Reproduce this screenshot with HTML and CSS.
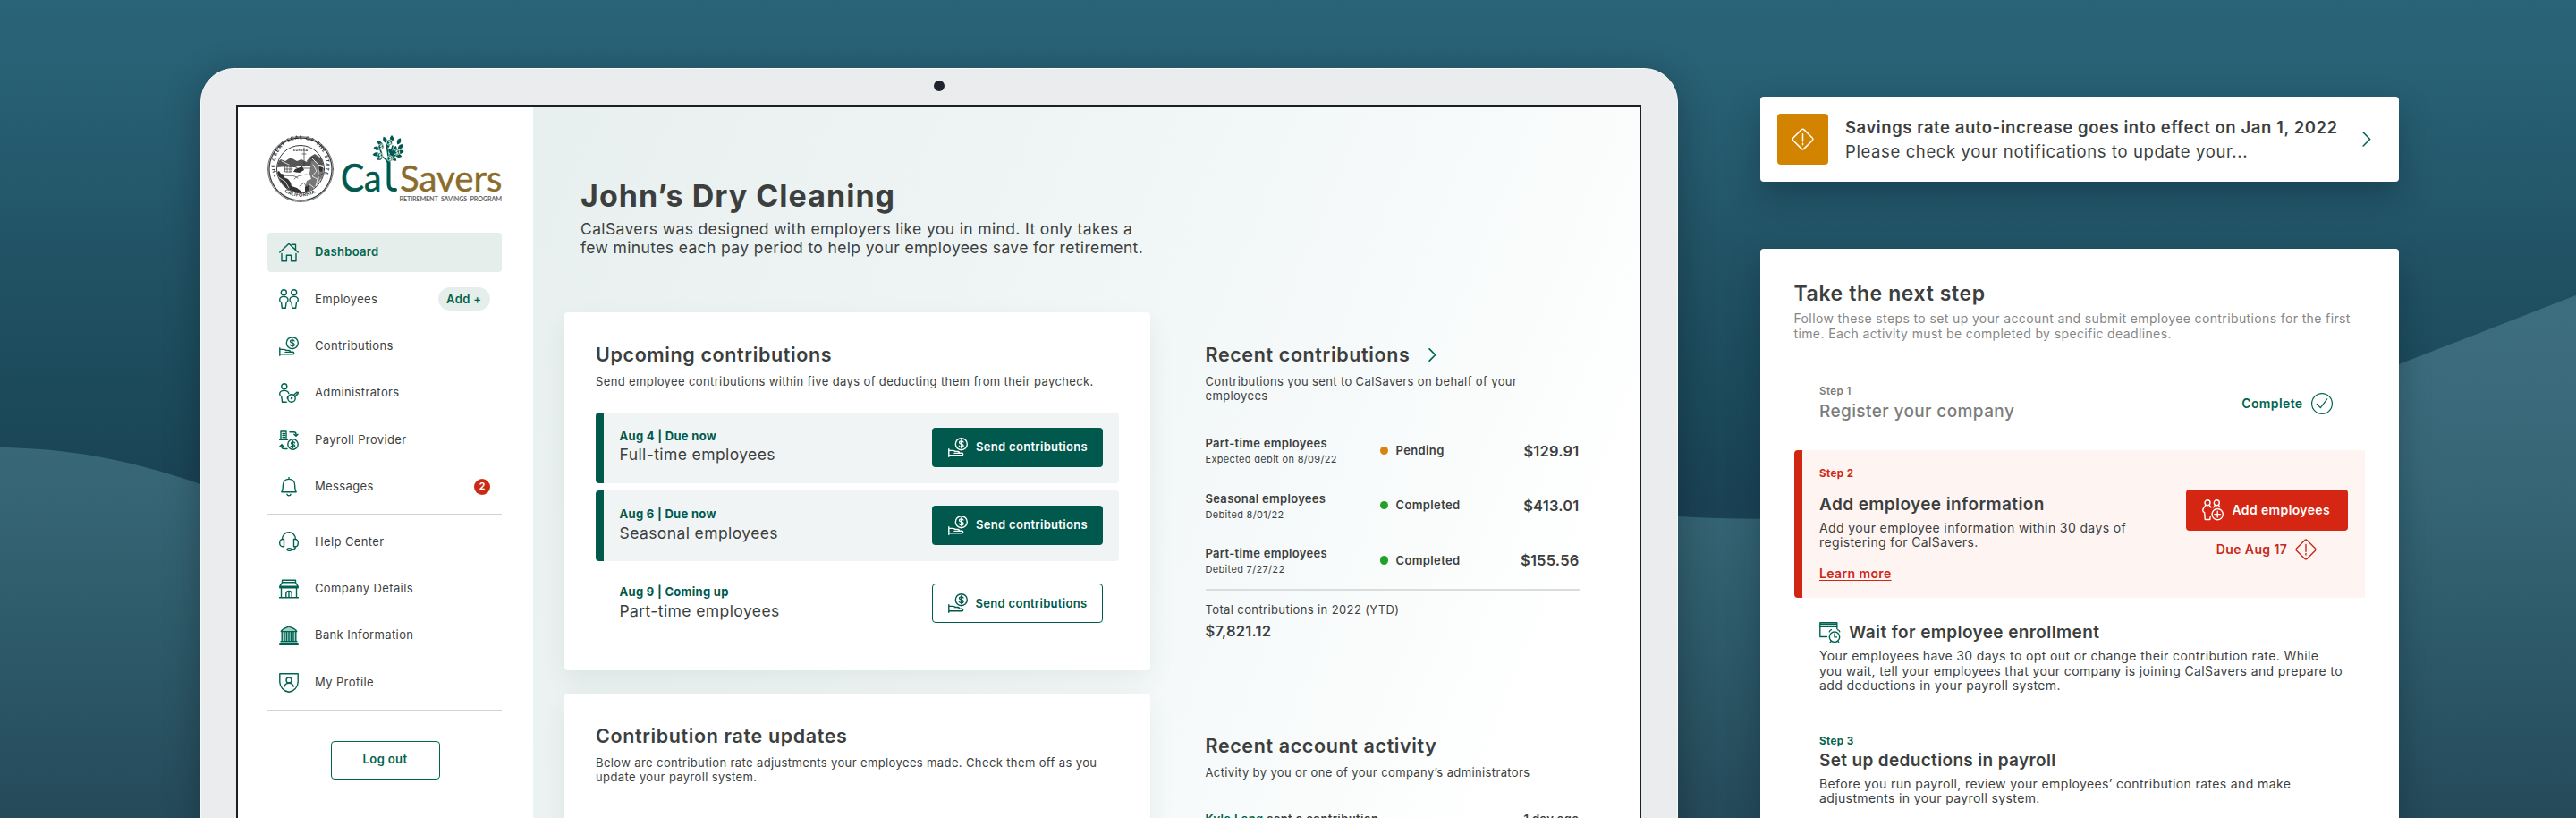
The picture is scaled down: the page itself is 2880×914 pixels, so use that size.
FILE: index.html
```html
<!DOCTYPE html>
<html lang="en">
<head>
<meta charset="utf-8">
<title>CalSavers Dashboard</title>
<link rel="stylesheet" href="styles.css">
</head>
<body>
<svg class="defs" width="0" height="0" aria-hidden="true">
  <symbol id="i-home" viewBox="0 0 22 22"><path d="M.8 11 11 1.2 21.2 11M14.3 4.3V2.2h4.2v6.1M3 12.5v8.3h5.4v-6.6h5.2v6.6H19v-8.3"/></symbol>
  <symbol id="i-people" viewBox="0 0 22 22"><circle cx="5.3" cy="3.7" r="3"/><circle cx="16.7" cy="3.7" r="3"/><path d="M5.3 8.4C2.4 8.4.7 9.9.7 12.2c0 1.300.5 2.300 1.800 2.700l.9 6.400h3.800l.9-6.400c1.200-.4 1.900-1.400 1.900-2.700 0-2.300-1.800-3.800-4.700-3.800zM16.700 8.400c-2.900 0-4.700 1.500-4.700 3.800 0 1.300.7 2.300 1.900 2.700l.9 6.400h3.800l.9-6.400c1.300-.4 1.800-1.400 1.800-2.700 0-2.300-1.700-3.800-4.600-3.800z"/></symbol>
  <symbol id="i-hand" viewBox="0 0 22 22"><circle cx="14.800" cy="7.200" r="6.500"/><path d="M17 5c-.5-.8-1.200-1.100-2.200-1.100-1.200 0-2.200.6-2.200 1.600 0 2.300 4.500 1 4.500 3.400 0 1-1 1.700-2.300 1.700-1.100 0-2-.4-2.400-1.300M14.800 2.700v9M.8 12.800v8.500M.8 14.400h4.800c1 0 1.800 1 2.800 1h2.800c1.500 0 1.500 2 0 2H7M10.800 17.300h4.600c1.700 0 1.700 2.500 0 2.500H.8"/></symbol>
  <symbol id="i-admin" viewBox="0 0 22 22"><circle cx="5.800" cy="3.700" r="3"/><path d="M10.800 11.500c-.5-2-2.300-3.100-5-3.100C2.600 8.400.7 10 .7 12.300c0 1.300.6 2.200 2 2.600l.9 6.400h4.600M9.600 15.500l-.4 1.500"/><circle cx="14" cy="17" r="4.200"/><circle cx="14" cy="17" r=".6"/><path d="M16.200 13.500l3.700-3.300 1.400.3-.2 1.500-1.100.4-.2 1.300-1.300.3-.8 1.200"/></symbol>
  <symbol id="i-payroll" viewBox="0 0 22 22"><path d="M.5 10.300h9M2 10V1h6v9M4 3.500h2.500M4 5.500h2.500M4 7.700h2.500M12 1.800h4.500c1.700 0 2.500.8 2.500 2.500v1.500M16.800 4.200 19 6.300l2-2.100M9 20.500H5.500C3.800 20.500 3 19.700 3 18v-1.800M.8 18 3 15.800 5 18"/><circle cx="15.500" cy="15.500" r="5.700"/><path d="M17.600 13.800c-.5-.7-1.200-.9-2.100-.9-1.200 0-2 .5-2 1.300 0 2 4.100.8 4.100 2.800 0 .8-.9 1.400-2.100 1.400-1 0-1.800-.4-2.200-1M15.500 11.800v7.600"/></symbol>
  <symbol id="i-bell" viewBox="0 0 22 22"><path d="M11 .5v1.800M2.800 16.800c1.500-1.800 1.500-3.500 1.500-7C4.300 5 7 2.400 11 2.400S17.700 5 17.700 9.800c0 3.500 0 5.200 1.500 7zM9 19.300c.3 1.900 3.700 1.900 4 0"/></symbol>
  <symbol id="i-headset" viewBox="0 0 22 22"><path d="M3.500 8.500C3.500 3.800 6.800.8 11 .8s7.500 3 7.500 7.700M5.500 8.500v8.300H4c-2 0-3.300-1.700-3.300-4.100S2 8.500 4 8.500zM16.500 8.500v8.300H18c2 0 3.300-1.700 3.300-4.100S20 8.500 18 8.500zM18.500 16.800c0 2.200-1.700 3.200-4.500 3.200"/><ellipse cx="11.500" cy="20" rx="2.500" ry="1.400"/></symbol>
  <symbol id="i-store" viewBox="0 0 22 22"><path d="M3.500 1.200h15v2.600h-15zM3.500 3.800.8 8.200h20.400l-2.700-4.400M.8 8.200v1.500h20.400V8.200M2.500 9.700v11M19.500 9.700v11M.3 20.800h21.400M7.800 20.800v-4c0-4.500 6.400-4.500 6.400 0v4M11 14v6.500"/></symbol>
  <symbol id="i-bank" viewBox="0 0 22 22"><path class="tint" d="M2 6.500C3.500 3 8 2.600 11 .8c3 1.800 7.500 2.200 9 5.700zM3 7h16v10H3z"/><path d="M2.300 6.600C3.500 3.300 8 2.800 11 .9c3 1.900 7.500 2.400 8.700 5.700zM3.200 7v10.500M6 7v10.500M8.500 7v10.500M11 7v10.500M13.500 7v10.500M16 7v10.500M18.800 7v10.500M2 17.700h18M.8 20h20.400M.8 21.500h20.400"/></symbol>
  <symbol id="i-profile" viewBox="0 0 22 22"><path d="M.8.800h20.400v9c0 6-4.500 10.500-10.200 11.500C5.300 20.300.8 15.800.8 9.800z"/><circle cx="11" cy="8" r="3"/><path d="M5.800 15.200c.8-2.800 2.600-4 5.200-4s4.400 1.200 5.200 4"/></symbol>
  <symbol id="i-warn" viewBox="0 0 24 24"><path d="M10.600 1.800a2 2 0 0 1 2.800 0l8.800 8.800a2 2 0 0 1 0 2.800l-8.800 8.800a2 2 0 0 1-2.800 0l-8.800-8.800a2 2 0 0 1 0-2.800zM12 6.500v7.800M12 16.500v1.600"/></symbol>
  <symbol id="i-check" viewBox="0 0 24 24"><circle cx="12" cy="12" r="11.400"/><path d="m6.300 12.500 4 4.200 7.400-9.900"/></symbol>
  <symbol id="i-addpeople" viewBox="0 0 24 24"><circle cx="6" cy="3.800" r="3"/><circle cx="16.300" cy="3.800" r="3"/><path d="M3.900 6.300 2.200 9C1.200 10 .8 11 .8 12.300c0 1.200.7 2 1.900 2.400l.6 7.800h5.500M8 6.300l2 2.700M14.400 6.300 12.800 9M18.300 6.300l1.600 2.400M8.800 22.500l.4-3"/><circle cx="17.200" cy="16.600" r="6.100"/><path d="M17.200 13.300v6.600M13.900 16.600h6.600"/></symbol>
  <symbol id="i-calendar" viewBox="0 0 24 24"><path d="M8.500 16.500H.8V.8h19v6.700M.8 5.300h19M.8 2.500h19"/><circle cx="17" cy="16.700" r="5.700"/><path d="M17 13.300v3.600h2.500M11.300 10.800c.3-1.200 1-1.900 2.200-2.200M20.500 8.600c1.200.3 2 1 2.300 2.200M13.300 21.300l-1 1.300M20.700 21.300l1 1.300"/></symbol>
  <symbol id="i-chevron" viewBox="0 0 10 17"><path d="m1.200 1 7.400 7.500L1.200 16"/></symbol>
  <symbol id="leaf" viewBox="-3 -8 6 8" overflow="visible"><path d="M0 0C-3-3-2.600-5.500 0-8c2.600 2.500 3 5 0 8z"/></symbol>
</svg>

<div class="stage">
  <svg class="hills" viewBox="0 0 2880 914" preserveAspectRatio="none" aria-hidden="true">
    <defs><linearGradient id="hill" gradientUnits="userSpaceOnUse" x1="0" y1="330" x2="0" y2="914">
      <stop offset="0" stop-color="#3d6e80"/><stop offset=".3" stop-color="#386878"/><stop offset=".63" stop-color="#2e5b6a"/><stop offset="1" stop-color="#254a5a"/>
    </linearGradient></defs>
    <path fill="url(#hill)" d="M0 500C80 501 150 515 224 541 700 700 1300 540 1876 577 C2180 596 2400 515 2682 407L2880 330V914H0z"/>
  </svg>

  <section class="laptop">
    <span class="camera"></span>
    <div class="screen">
      <aside class="sidebar">
        <svg class="logo" viewBox="0 0 262 77" role="img" aria-label="CalSavers">
          <defs>
            <path id="ring" d="M11.500 46.500A28.500 28.500 0 1 1 62.500 46.500"/>
            <path id="ringlow" d="M16 62A32.500 32.500 0 0 0 58 62"/>
            <clipPath id="disc"><circle cx="37" cy="39" r="26"/></clipPath>
          </defs>
          <g fill="none" stroke="#3a3a3a"><circle cx="37" cy="39" r="36.500" stroke-width=".7"/><circle cx="37" cy="39" r="35" stroke-width="1.300" stroke-dasharray="1 .5"/><circle cx="37" cy="39" r="26.500" stroke-width="1"/></g>
          <g class="seal-text"><text><textPath href="#ring" textLength="126">THE GREAT SEAL OF THE STATE OF</textPath></text><text><textPath href="#ringlow" startOffset="4" textLength="36">CALIFORNIA</textPath></text><text class="eureka" x="29" y="18.500" textLength="16">EUREKA</text></g>
          <g clip-path="url(#disc)">
            <path fill="#555" d="M10 32l5-4 5 2 6-4 7 4 5-2 6 3 4-6 5-3 6 4 4 4v5l-10-2-5 3-10-1-8 2-9-1-11 1z"/>
            <path fill="#333" d="M9 43l4-2 2 3 4 1-1 3 5 2 3 4 1 4 6 2 4 3 2 4H22L9 53z"/>
            <path fill="#777" d="M49 30l6 0 3 6 5 2v14l-6 12-9 3-6-7 2-8 5-2-2-6z"/>
            <path stroke="#fff" stroke-width=".8" fill="none" d="M51 34l4 7-5 6 6 3-2 8 6-8M11 47l9 6 4 7M16 30l8 4M50 27l7 7M57 40v10M46 55l9 7"/>
            <path stroke="#333" stroke-width=".7" fill="none" d="M41 15v21M39 22h4M38 38h10M28 35l9 5-4 2M20 36h7v6h-7zM22 36v6M25 36v6M19 39h9M44 30c4-6 10-6 11-1M30 50c5-5 9-4 14-5M36 58l5-4 3 6M57 47l6-4M18 46c6 1 12-1 16 3"/>
            <path fill="#333" d="M31 39l8-3 2 4-5 3-7-1zM42 59l4-2 1 6-5 2zM58 36l4 1-1 5-3-1z"/>
          </g>
          <g class="wordmark">
            <text x="82" y="64" class="cal" textLength="45.500" lengthAdjust="spacingAndGlyphs">Ca</text>
            <text x="148" y="64" class="savers" textLength="114.500" lengthAdjust="spacingAndGlyphs">Savers</text>
            <text x="147.500" y="74.500" class="tagline" textLength="114.500">RETIREMENT SAVINGS PROGRAM</text>
          </g>
          <path fill="none" stroke="#00594c" stroke-width="4" d="M135.500 28v27c0 5.500 2.500 7.300 7.500 7"/>
          <g fill="none" stroke="#00594c" stroke-width="1.700"><path d="M135.500 35c0-6-5-9-10-11M135.500 33c1-6 5-9 11-11M135.500 28l-2-15M136 27l4-14M129 26l-3-9M142 24l4-7"/></g>
          <g class="leaves">
            <use href="#leaf" width="6" height="8" transform="translate(136 1)"/>
            <use href="#leaf" width="6" height="8" transform="translate(127 4) rotate(-25)"/>
            <use href="#leaf" width="6" height="8" transform="translate(146 3) rotate(25)"/>
            <use href="#leaf" width="6" height="8" transform="translate(121 10) rotate(-50)"/>
            <use href="#leaf" width="6" height="8" transform="translate(150 9) rotate(50)"/>
            <use href="#leaf" width="6" height="8" transform="translate(118 18) rotate(-80)"/>
            <use href="#leaf" width="6" height="8" transform="translate(152 16) rotate(80)"/>
            <use href="#leaf" width="6" height="8" transform="translate(118 26) rotate(-100)"/>
            <use href="#leaf" width="6" height="8" transform="translate(151 22) rotate(105)"/>
            <use href="#leaf" width="6" height="8" transform="translate(124 31) rotate(-120)"/>
            <use href="#leaf" width="6" height="8" transform="translate(146 27) rotate(125)"/>
            <use href="#leaf" width="6" height="8" transform="translate(131 8) rotate(-10)"/>
            <use href="#leaf" width="6" height="8" transform="translate(141 12) rotate(20)"/>
            <use href="#leaf" width="6" height="8" transform="translate(133 17) rotate(-30)"/>
            <use href="#leaf" width="6" height="8" transform="translate(138 17) rotate(15)"/>
          </g>
          <g class="coins"><circle cx="136.500" cy="9" r="3.200"/><circle cx="127" cy="14" r="3.200"/><circle cx="126" cy="24" r="3.200"/><circle cx="144.500" cy="20" r="3.200"/><circle cx="137" cy="27" r="3.200"/></g>
          <g class="coin-text"><text x="136.500" y="11">$</text><text x="127" y="16">$</text><text x="126" y="26">$</text><text x="144.500" y="22">$</text><text x="137" y="29">$</text></g>
        </svg>

        <nav class="nav">
          <a class="nav-item active"><svg class="ico"><use href="#i-home"/></svg>Dashboard</a>
          <a class="nav-item"><svg class="ico"><use href="#i-people"/></svg>Employees<span class="pill">Add +</span></a>
          <a class="nav-item"><svg class="ico"><use href="#i-hand"/></svg>Contributions</a>
          <a class="nav-item"><svg class="ico"><use href="#i-admin"/></svg>Administrators</a>
          <a class="nav-item"><svg class="ico"><use href="#i-payroll"/></svg>Payroll Provider</a>
          <a class="nav-item"><svg class="ico"><use href="#i-bell"/></svg>Messages<span class="badge">2</span></a>
        </nav>
        <nav class="nav ruled">
          <a class="nav-item"><svg class="ico"><use href="#i-headset"/></svg>Help Center</a>
          <a class="nav-item"><svg class="ico"><use href="#i-store"/></svg>Company Details</a>
          <a class="nav-item"><svg class="ico"><use href="#i-bank"/></svg>Bank Information</a>
          <a class="nav-item"><svg class="ico"><use href="#i-profile"/></svg>My Profile</a>
        </nav>
        <div class="logout-area"><button class="logout">Log out</button></div>
      </aside>

      <main class="main">
        <header class="intro">
          <h1>John’s Dry Cleaning</h1>
          <p>CalSavers was designed with employers like you in mind. It only takes a<br>few minutes each pay period to help your employees save for retirement.</p>
        </header>
        <div class="columns">
          <div class="col-left">
            <section class="card upcoming">
              <h2>Upcoming contributions</h2>
              <p class="lead">Send employee contributions within five days of deducting them from their paycheck.</p>
              <div class="due-list">
                <div class="due now"><div><div class="date">Aug 4 | Due now</div><div class="who">Full-time employees</div></div><button class="send"><svg class="ico"><use href="#i-hand"/></svg>Send contributions</button></div>
                <div class="due now"><div><div class="date">Aug 6 | Due now</div><div class="who">Seasonal employees</div></div><button class="send"><svg class="ico"><use href="#i-hand"/></svg>Send contributions</button></div>
                <div class="due"><div><div class="date">Aug 9 | Coming up</div><div class="who">Part-time employees</div></div><button class="send outline"><svg class="ico"><use href="#i-hand"/></svg>Send contributions</button></div>
              </div>
            </section>
            <section class="card updates">
              <h2>Contribution rate updates</h2>
              <p class="lead">Below are contribution rate adjustments your employees made. Check them off as you<br>update your payroll system.</p>
            </section>
          </div>
          <div class="col-right">
            <h2>Recent contributions<svg class="chev small"><use href="#i-chevron"/></svg></h2>
            <p class="lead">Contributions you sent to CalSavers on behalf of your<br>employees</p>
            <div class="history">
              <div class="entry"><div><div class="name">Part-time employees</div><div class="note">Expected debit on 8/09/22</div></div><div class="status pending">Pending</div><div class="amount">$129.91</div></div>
              <div class="entry"><div><div class="name">Seasonal employees</div><div class="note">Debited 8/01/22</div></div><div class="status">Completed</div><div class="amount">$413.01</div></div>
              <div class="entry"><div><div class="name">Part-time employees</div><div class="note">Debited 7/27/22</div></div><div class="status">Completed</div><div class="amount">$155.56</div></div>
            </div>
            <div class="total"><div class="total-label">Total contributions in 2022 (YTD)</div><div class="total-sum">$7,821.12</div></div>
            <h2>Recent account activity</h2>
            <p class="lead">Activity by you or one of your company’s administrators</p>
            <div class="activity"><span><b>Kyle Lang</b> sent a contribution</span><span>1 day ago</span></div>
          </div>
        </div>
      </main>
    </div>
  </section>

  <div class="side">
    <section class="notice">
      <div class="notice-icon"><svg><use href="#i-warn"/></svg></div>
      <div class="notice-text"><strong>Savings rate auto-increase goes into effect on Jan 1, 2022</strong><span>Please check your notifications to update your...</span></div>
      <svg class="chev"><use href="#i-chevron"/></svg>
    </section>
    <section class="steps">
      <h2>Take the next step</h2>
      <p class="hint">Follow these steps to set up your account and submit employee contributions for the first<br>time. Each activity must be completed by specific deadlines.</p>
      <div class="step done">
        <div><div class="step-no">Step 1</div><h3>Register your company</h3></div>
        <div class="complete">Complete<svg><use href="#i-check"/></svg></div>
      </div>
      <div class="step urgent">
        <div><div class="step-no">Step 2</div><h3>Add employee information</h3><p>Add your employee information within 30 days of<br>registering for CalSavers.</p><a class="more">Learn more</a></div>
        <div class="action"><button class="add"><svg><use href="#i-addpeople"/></svg>Add employees</button><div class="due-date">Due Aug 17<svg><use href="#i-warn"/></svg></div></div>
      </div>
      <div class="step wait">
        <div><h3><svg><use href="#i-calendar"/></svg>Wait for employee enrollment</h3><p>Your employees have 30 days to opt out or change their contribution rate. While<br>you wait, tell your employees that your company is joining CalSavers and prepare to<br>add deductions in your payroll system.</p></div>
      </div>
      <div class="step setup">
        <div><div class="step-no">Step 3</div><h3>Set up deductions in payroll</h3><p>Before you run payroll, review your employees’ contribution rates and make<br>adjustments in your payroll system.</p></div>
      </div>
    </section>
  </div>
</div>
</body>
</html>
```

FILE: styles.css
```css
* { box-sizing: border-box; }
html, body { margin: 0; height: 914px; overflow: hidden; }
body { font-family: Inter, "Open Sans", sans-serif; font-size: 13px; line-height: 15.6px; letter-spacing: .029em; color: #3d3f3f; white-space: nowrap; }
h1, h2, h3, p { margin: 0; }
svg { display: block; fill: none; stroke: currentColor; stroke-width: 1.4; stroke-linecap: round; stroke-linejoin: round; flex: none; overflow: visible; }
button { font: inherit; letter-spacing: inherit; border: 0; border-radius: 4px; display: flex; align-items: center; }
.defs { position: absolute; }
.tint { fill: #a5cfc5; stroke: none; }

.stage { position: relative; display: flex; width: 2880px; height: 914px; overflow: hidden; background: linear-gradient(#2a6479 0, #265c70 150px, #215365 280px, #1c4b5c 420px, #1a4254 560px); }
.hills { position: absolute; inset: 0; width: 100%; height: 100%; stroke: none; }

.laptop { position: relative; width: 1652px; height: 900px; margin: 76px 0 0 224px; padding: 40px 40px 0 39px; border: 1px solid #f6fafb; border-radius: 38px 38px 0 0; background: #ebecee; box-shadow: 0 10px 40px rgba(0, 0, 0, .28); flex: none; }
.camera { position: absolute; left: 819px; top: 13px; width: 12px; height: 12px; border-radius: 50%; background: #20242f; }
.screen { display: flex; height: 860px; border: 2px solid #1d2021; background: #fff; }

.sidebar { width: 330px; flex: none; padding: 31px 35px 0 33px; background: #fff; }
.logo { width: 262px; height: 77px; margin-bottom: 33px; stroke: none; fill: #333; }
.logo text { letter-spacing: 0; }
.seal-text { font: 700 5.500px Lato, sans-serif; fill: #222; }
.eureka { font-size: 3.500px; }
.wordmark { font-family: Lato, sans-serif; }
.cal { font-size: 43px; fill: #00594c; stroke: #00594c; stroke-width: .6; }
.savers { font-size: 40px; fill: #8a6c2c; stroke: #8a6c2c; stroke-width: .4; }
.tagline { font-size: 7.200px; font-weight: 700; fill: #666; word-spacing: 2px; }
.leaves { fill: #00594c; }
.coins { fill: #00594c; stroke: #fff; stroke-width: .7; }
.coin-text { font: 700 5.500px Lato, sans-serif; fill: #fff; text-anchor: middle; }

.nav { display: flex; flex-direction: column; gap: 8.4px; }
.nav.ruled { margin-top: 8px; padding: 8.400px 0 8px; border: solid #d2d4d4; border-width: 1.500px 0; }
.nav-item { display: flex; align-items: center; height: 44px; padding: 0 13px; border-radius: 4px; }
.nav-item .ico { margin-right: 18px; color: #006351; }
.ico { width: 22px; height: 22px; }
.active { background: #e6eeec; color: #00654f; font-weight: 600; letter-spacing: .024em; }
.pill { margin-left: auto; padding: 0 9.500px; height: 26px; line-height: 26px; border-radius: 13px; background: #e6eeec; color: #00654f; font-weight: 600; }
.badge { margin-left: auto; width: 18px; height: 18px; line-height: 18px; text-align: center; border-radius: 50%; background: #c92a14; color: #fff; font-size: 10.500px; font-weight: 700; letter-spacing: 0; }
.logout-area { display: flex; justify-content: center; margin: 34px -1px 0 0; }
.logout { width: 122px; height: 43px; justify-content: center; border: 1.500px solid #00654f; background: #fff; color: #00654f; font-weight: 600; }

.main { flex: 1; padding: 80px 0 0 35px; background: linear-gradient(112deg, #e8f0ef 0%, #eef4f4 35%, #f5f9f9 62%, #fff 88%); }
.intro { height: 150.300px; padding-left: 18px; }
h1 { font-size: 34px; line-height: 40px; font-weight: 700; letter-spacing: .030em; }
.intro p { margin-top: 7px; font-size: 17.500px; line-height: 20.600px; letter-spacing: .021em; }
.columns { display: flex; gap: 62px; }
.col-left { width: 654.500px; }
.card { padding: 34px 35px 0; border-radius: 4px; background: #fff; box-shadow: 0 12px 30px rgba(30, 60, 60, .07); }
.upcoming { height: 399.400px; margin-bottom: 26.300px; }
.updates { height: 200px; }
h2 { font-size: 21.500px; line-height: 26px; font-weight: 600; letter-spacing: .029em; }
.lead { margin-top: 10px; }
.due-list { display: flex; flex-direction: column; gap: 8.300px; margin-top: 26px; }
.due { display: flex; justify-content: space-between; align-items: flex-start; height: 79px; padding: 17px 17.500px 0 26.500px; border-radius: 4px; }
.now { padding-left: 17.500px; border-left: 9px solid #00594c; background: #f0f4f5; }
.date { margin-top: 1px; line-height: 16px; font-weight: 700; color: #00594c; letter-spacing: .023em; }
.who { margin-top: 3.600px; font-size: 17.500px; line-height: 20px; letter-spacing: .023em; }
.send { width: 191px; height: 44px; padding: 0 0 0 18px; gap: 9px; background: #00594c; color: #fff; font-weight: 600; letter-spacing: .024em; }
.send.outline { border: 1.500px solid #00594c; padding-left: 16.500px; background: #fff; color: #00594c; }

.col-right { width: 418px; padding-top: 34px; }
.col-right h2 { display: flex; align-items: center; }
.chev { width: 10px; height: 17px; color: #006351; stroke-width: 1.600; }
.chev.small { width: 9px; height: 15px; margin-left: 21px; stroke-width: 2; }
.history { display: flex; flex-direction: column; gap: 28.200px; margin-top: 37px; padding-bottom: 15.500px; border-bottom: 2px solid #dadcdd; }
.entry { display: grid; grid-template-columns: 195px 1fr auto; align-items: center; height: 33px; font-weight: 600; }
.name { line-height: 16px; letter-spacing: .023em; }
.note { margin-top: 3px; font-size: 11px; line-height: 14px; font-weight: 400; letter-spacing: .030em; }
.status::before { content: ""; display: inline-block; width: 9.500px; height: 9.500px; margin-right: 8.500px; border-radius: 50%; background: #21a128; }
.pending::before { background: #d68310; }
.amount, .total-sum { font-size: 16.500px; line-height: 20px; font-weight: 600; letter-spacing: .012em; }
.total { height: 160px; padding-top: 12.500px; }
.total-label { line-height: 16px; margin-bottom: 5.700px; }
.activity { display: flex; justify-content: space-between; margin-top: 35.500px; line-height: 16px; font-weight: 600; }
.activity b { color: #00654f; font-weight: 600; }

.side { position: relative; width: 714px; flex: none; margin: 108px 0 0 92px; }
.notice { display: flex; align-items: center; height: 95px; margin-bottom: 75px; padding: 0 31px 0 19px; border-radius: 4px; background: #fff; box-shadow: 0 16px 34px rgba(10, 30, 40, .34); }
.notice-icon { display: flex; align-items: center; justify-content: center; width: 57px; height: 57px; margin-right: 19px; border-radius: 4px; background: #d28400; color: #fff; }
.notice-icon svg { width: 25px; height: 25px; }
.notice-text { flex: 1; display: flex; flex-direction: column; gap: 5.700px; font-size: 18.500px; line-height: 22px; letter-spacing: .033em; }
.notice-text strong { font-weight: 600; letter-spacing: .030em; }

.steps { height: 700px; padding: 36px 38px 0 37.500px; border-radius: 4px; background: #fff; box-shadow: 0 16px 34px rgba(10, 30, 40, .34); font-size: 14px; line-height: 16.400px; }
.steps > h2 { font-size: 23px; line-height: 28px; letter-spacing: .026em; }
.hint { margin-top: 6.400px; color: #858787; }
.step { display: flex; justify-content: space-between; padding-left: 28.500px; }
.step-no { font-size: 11.500px; line-height: 14px; font-weight: 700; letter-spacing: .038em; }
h3 { font-size: 19px; line-height: 24px; font-weight: 600; letter-spacing: .021em; }
.done { height: 73px; margin-top: 49px; color: #7b7d7d; }
.done h3 { margin-top: 3.600px; font-weight: 500; }
.done .step-no { font-weight: 600; }
.complete { display: flex; align-items: center; gap: 9px; height: 24px; margin: 9px 36.500px 0 0; color: #00654f; font-weight: 600; }
.complete svg { width: 24px; height: 24px; stroke-width: 1.200; }
.urgent { height: 165px; margin: 0 0 27px; padding: 18.600px 19.500px 0 19.500px; border-left: 9px solid #cf2714; border-radius: 4px 0 0 4px; background: #fef4f2; }
.urgent .step-no, .more { color: #cf2714; }
.urgent h3 { margin: 16.700px 0 5.200px; }
.more { display: inline-block; margin-top: 19px; font-weight: 600; text-decoration: underline; text-underline-offset: 2px; }
.action { display: flex; flex-direction: column; align-items: center; padding-top: 25px; }
.add { width: 181px; height: 46.500px; padding: 0 0 0 18px; gap: 10px; background: #d42612; color: #fff; font-weight: 600; letter-spacing: .026em; }
.add svg, .due-date svg, .wait svg { width: 24px; height: 24px; }
.due-date { display: flex; align-items: center; gap: 9px; margin-top: 9px; color: #c62a1a; font-weight: 600; }
.wait h3 { display: flex; align-items: center; gap: 9px; margin-bottom: 6px; }
.wait svg { color: #006351; }
.setup { margin-top: 46.800px; }
.setup .step-no { color: #00654f; }
.setup h3 { margin: 3px 0 5.300px; letter-spacing: .018em; }
```
